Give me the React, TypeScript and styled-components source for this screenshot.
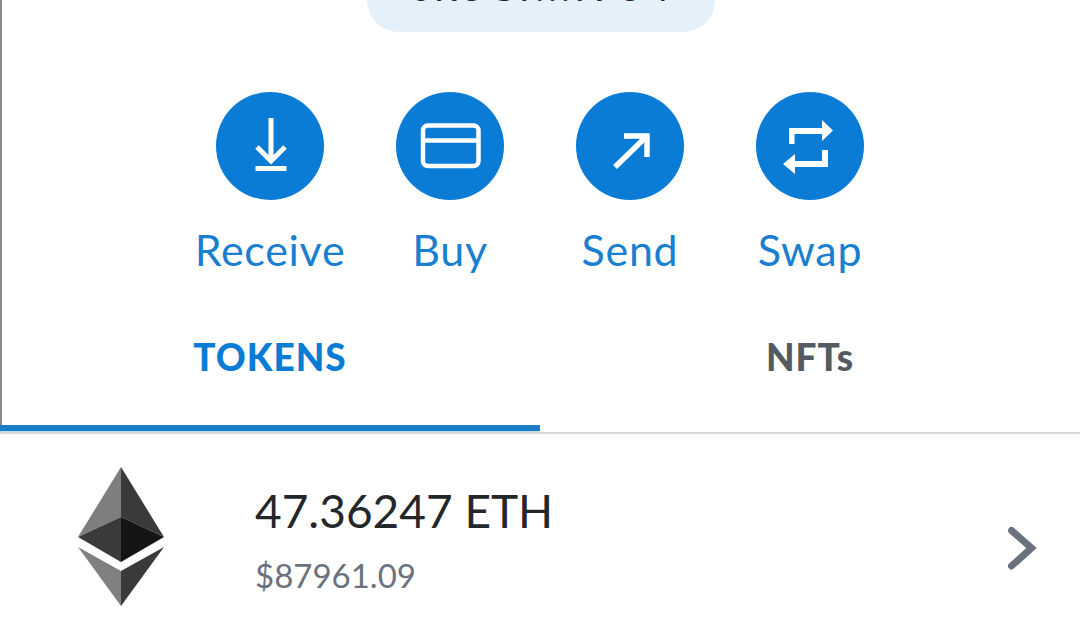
import styled, { createGlobalStyle } from 'styled-components';

const GlobalStyle = createGlobalStyle`
  html, body {
    margin: 0;
    padding: 0;
    background: #fff;
  }
`;

const Screen = styled.div`
  width: 1080px;
  height: 640px;
  overflow: hidden;
  background: #fff;
  font-family: 'Lato', 'Liberation Sans', sans-serif;
  display: flex;
  flex-direction: column;
`;

const Upper = styled.div`
  height: 425px;
  flex: none;
  box-sizing: border-box;
  border-left: 2px solid #8a8a8a;
  display: flex;
  flex-direction: column;
  align-items: center;
`;

const AddressPill = styled.div`
  width: 348px;
  height: 32px;
  flex: none;
  background: #e4f0fa;
  border-radius: 0 0 32px 32px;
  display: flex;
  justify-content: center;
  align-items: flex-end;
  overflow: hidden;
`;

const AddressText = styled.span`
  font-size: 42px;
  line-height: 42px;
  letter-spacing: 3px;
  color: #24272a;
  margin-bottom: 26px;
  white-space: nowrap;
`;

const Actions = styled.div`
  margin-top: 60px;
  margin-left: -2px;
  display: flex;
  gap: 72px;
`;

const Action = styled.div`
  width: 108px;
  display: flex;
  flex-direction: column;
  align-items: center;
`;

const Circle = styled.div`
  width: 108px;
  height: 108px;
  border-radius: 50%;
  background: #0a7cd6;
  display: flex;
  align-items: center;
  justify-content: center;
`;

const ActionLabel = styled.span`
  margin-top: 26px;
  font-size: 43px;
  line-height: 48px;
  letter-spacing: 0.7px;
  color: #1a7fcf;
  white-space: nowrap;
`;

const Tabs = styled.div`
  margin-top: 62px;
  align-self: stretch;
  display: flex;
  margin-left: -2px;
`;

const Tab = styled.div<{ $active?: boolean }>`
  flex: 1;
  text-align: center;
  font-size: 37px;
  line-height: 42px;
  font-weight: 900;
  letter-spacing: 1px;
  color: ${({ $active }) => ($active ? '#0a7cd6' : '#535a61')};
`;

const TabRail = styled.div`
  height: 9px;
  flex: none;
  display: flex;
  flex-direction: column;
`;

const ActiveBar = styled.div`
  width: 540px;
  height: 6px;
  background: #1b7cc8;
  border-bottom: 1px solid #bcdcf0;
`;

const RailLine = styled.div`
  height: 2px;
  background: #d6d9dc;
`;

const TokenRow = styled.div`
  flex: 1;
  display: flex;
  align-items: center;
  padding: 0 42px 0 77px;
`;

const TokenInfo = styled.div`
  flex: 1;
  margin-left: 90px;
  display: flex;
  flex-direction: column;
  margin-top: 5px;
`;

const Amount = styled.div`
  font-size: 46px;
  line-height: 56px;
  color: #24272a;
`;

const Fiat = styled.div`
  margin-top: 15px;
  font-size: 33px;
  line-height: 42px;
  color: #6a737d;
`;

const ChevronWrap = styled.div`
  flex: none;
  display: flex;
  margin-top: 22px;
`;

function ReceiveIcon() {
  return (
    <svg width="108" height="108" viewBox="0 0 108 108" fill="none" stroke="#fff" strokeWidth="5">
      <path d="M55 26V68" />
      <path d="M41 55L55 69L69 55" />
      <path d="M39.5 76.5H70.5" />
    </svg>
  );
}

function BuyIcon() {
  return (
    <svg width="108" height="108" viewBox="0 0 108 108" fill="none" stroke="#fff" strokeWidth="4.5">
      <rect x="27" y="33.5" width="55.5" height="40.5" rx="5" />
      <path d="M27 48.5H82.5" />
    </svg>
  );
}

function SendIcon() {
  return (
    <svg width="108" height="108" viewBox="0 0 108 108" fill="none" stroke="#fff" strokeWidth="5.5">
      <path d="M39 75L71 44" />
      <path d="M48 44H71V65" />
    </svg>
  );
}

function SwapIcon() {
  return (
    <svg width="108" height="108" viewBox="0 0 108 108" fill="#fff">
      <path d="M33 52V36H66V28L77 38.5L66 49V42H38.5V52Z" />
      <path d="M72 58V75H39V82L27 72L39 62V69H66V58Z" />
    </svg>
  );
}

function EthIcon() {
  return (
    <svg width="88" height="140" viewBox="0 0 88 140" style={{ flex: 'none' }}>
      <polygon points="44,0 44,50 1,70" fill="#7e7e7e" />
      <polygon points="44,0 44,50 87,70" fill="#3a3a3a" />
      <polygon points="44,50 1,70 44,95" fill="#3a3a3a" />
      <polygon points="44,50 87,70 44,95" fill="#151515" />
      <polygon points="1,80 44,104 44,139" fill="#808080" />
      <polygon points="87,80 44,104 44,139" fill="#3a3a3a" />
    </svg>
  );
}

function Chevron() {
  return (
    <ChevronWrap>
      <svg width="30" height="50" viewBox="0 0 30 50" fill="none" stroke="#6a737d" strokeWidth="7" strokeLinecap="round">
        <path d="M3.5 7.5L23.5 25L3.5 43" />
      </svg>
    </ChevronWrap>
  );
}

const actions = [
  { label: 'Receive', icon: <ReceiveIcon /> },
  { label: 'Buy', icon: <BuyIcon /> },
  { label: 'Send', icon: <SendIcon /> },
  { label: 'Swap', icon: <SwapIcon /> },
];

export default function App() {
  return (
    <Screen>
      <GlobalStyle />
      <Upper>
        <AddressPill>
          <AddressText>0x3Cf...f934</AddressText>
        </AddressPill>
        <Actions>
          {actions.map((a) => (
            <Action key={a.label}>
              <Circle>{a.icon}</Circle>
              <ActionLabel>{a.label}</ActionLabel>
            </Action>
          ))}
        </Actions>
        <Tabs>
          <Tab $active>TOKENS</Tab>
          <Tab>NFTs</Tab>
        </Tabs>
      </Upper>
      <TabRail>
        <ActiveBar />
        <RailLine />
      </TabRail>
      <TokenRow>
        <EthIcon />
        <TokenInfo>
          <Amount>47.36247 ETH</Amount>
          <Fiat>$87961.09</Fiat>
        </TokenInfo>
        <Chevron />
      </TokenRow>
    </Screen>
  );
}
